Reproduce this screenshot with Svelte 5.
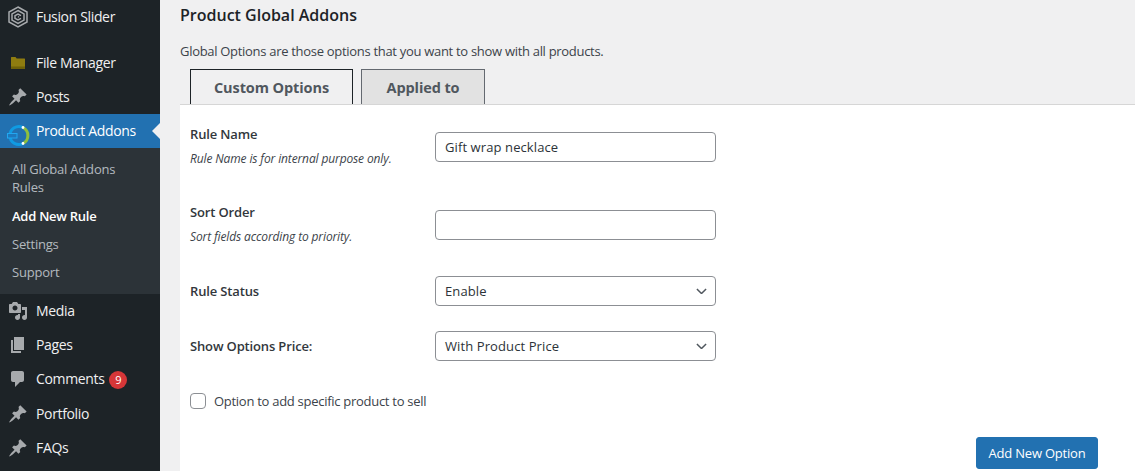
<script>
	const pin =
		'M10.44 3.02l1.82-1.82 6.36 6.35-1.83 1.82c-1.05-.68-2.48-.57-3.41.36l-.75.75c-.92.93-1.04 2.35-.35 3.41l-1.83 1.82-2.41-2.41-2.8 2.79c-.42.42-3.38 2.71-3.8 2.29s1.86-3.39 2.28-3.81l2.79-2.79L4.1 9.36l1.83-1.82c1.05.69 2.48.57 3.4-.36l.75-.75c.93-.92 1.05-2.35.36-3.41z';
	const media =
		'M13 11V4c0-.55-.45-1-1-1h-1.67L9 1H5L3.67 3H2c-.55 0-1 .45-1 1v7c0 .55.45 1 1 1h10c.55 0 1-.45 1-1zM7 4.5c1.38 0 2.5 1.12 2.5 2.5S8.38 9.5 7 9.5 4.5 8.38 4.5 7 5.62 4.5 7 4.5zM14 6h5v10.5c0 1.38-1.12 2.5-2.5 2.5S14 17.88 14 16.5s1.12-2.5 2.5-2.5c.17 0 .34.02.5.05V9h-3V6zm-4 8.05V13h2v3.5c0 1.38-1.12 2.5-2.5 2.5S7 17.88 7 16.5 8.12 14 9.5 14c.17 0 .34.02.5.05z';
	const pages = 'M6 15V2h10v13H6zm-1 1h8v2H3V5h2v11z';
	const comments =
		'M5 2h9c1.1 0 2 .9 2 2v7c0 1.1-.9 2-2 2h-2l-5 5v-5H5c-1.1 0-2-.9-2-2V4c0-1.1.9-2 2-2z';

	const lowerMenu = [
		{ label: 'Media', icon: media, h: 34 },
		{ label: 'Pages', icon: pages, h: 34 },
		{ label: 'Comments', icon: comments, h: 35, badge: 9 },
		{ label: 'Portfolio', icon: pin, h: 34 },
		{ label: 'FAQs', icon: pin, h: 34 }
	];
</script>

<div class="page">
	<aside class="sidebar">
		<a class="item first" href="#top">
			<svg class="icon logo" viewBox="0 0 22 22" fill="none" stroke="#a7aaad" stroke-width="1.5">
				<path d="M11 1l9 5v10l-9 5-9-5V6z" />
				<path d="M11 4.5l6 3.4v6.2l-6 3.4-6-3.4V7.9z" />
				<path d="M14 9.6L11 8 8 9.7v2.6l3 1.7 3-1.7" />
				<path d="M11 10.6l1 .5" />
			</svg>
			<span>Fusion Slider</span>
		</a>

		<a class="item files" href="#top">
			<svg class="icon" viewBox="0 0 20 20">
				<path d="M3 4.5c0-.3.2-.5.5-.5h4l1.2 1.4h7.8c.3 0 .5.2.5.5V15.5c0 .3-.2.5-.5.5h-13c-.3 0-.5-.2-.5-.5z" fill="#8f7c10" />
				<path d="M3 13.5h14v2c0 .3-.2.5-.5.5h-13c-.3 0-.5-.2-.5-.5z" fill="#6f6109" />
			</svg>
			<span>File Manager</span>
		</a>
		<a class="item" href="#top">
			<svg class="icon" viewBox="0 0 20 20"><path d={pin} fill="#a7aaad" /></svg>
			<span>Posts</span>
		</a>

		<a class="item current" href="#top">
			<svg class="icon addons" viewBox="0 0 24 24" fill="none">
				<path d="M17 3.5A9 9 0 1 0 17 19.5" stroke="#0f9be3" stroke-width="3" />
				<path d="M17 3.5A9 9 0 0 1 17 19.5" stroke="#8ebf3f" stroke-width="3" />
				<circle cx="17" cy="3.5" r="1.4" fill="#fff" />
				<circle cx="17" cy="19.5" r="1.4" fill="#fff" />
				<rect x="1.5" y="9.5" width="9.5" height="4.5" fill="#1d78bd" stroke="#22a7f0" />
			</svg>
			<span>Product Addons</span>
		</a>

		<ul class="submenu">
			<li class="wrapped"><a href="#top">All Global Addons Rules</a></li>
			<li><a class="active" href="#top">Add New Rule</a></li>
			<li><a href="#top">Settings</a></li>
			<li><a href="#top">Support</a></li>
		</ul>

		{#each lowerMenu as entry}
			<a class="item" style="height: {entry.h}px" href="#top">
				<svg class="icon" viewBox="0 0 20 20"><path d={entry.icon} fill="#a7aaad" /></svg>
				<span>{entry.label}</span>
				{#if entry.badge}
					<b class="badge">{entry.badge}</b>
				{/if}
			</a>
		{/each}
	</aside>

	<main class="content">
		<h1>Product Global Addons</h1>
		<p class="intro">Global Options are those options that you want to show with all products.</p>

		<div class="tabs">
			<button class="tab selected">Custom Options</button>
			<button class="tab">Applied to</button>
		</div>

		<section class="panel">
			<div class="row name-row">
				<div class="label">
					<strong>Rule Name</strong>
					<em>Rule Name is for internal purpose only.</em>
				</div>
				<input type="text" value="Gift wrap necklace" />
			</div>

			<div class="row sort-row">
				<div class="label">
					<strong>Sort Order</strong>
					<em>Sort fields according to priority.</em>
				</div>
				<input type="text" />
			</div>

			<div class="row status-row">
				<div class="label"><strong>Rule Status</strong></div>
				<div class="select">
					<span>Enable</span>
					<svg viewBox="0 0 12 7" fill="none"><path d="M1 1l5 5 5-5" stroke="#50575e" stroke-width="1.6" /></svg>
				</div>
			</div>

			<div class="row price-row">
				<div class="label"><strong>Show Options Price:</strong></div>
				<div class="select">
					<span>With Product Price</span>
					<svg viewBox="0 0 12 7" fill="none"><path d="M1 1l5 5 5-5" stroke="#50575e" stroke-width="1.6" /></svg>
				</div>
			</div>

			<label class="check">
				<input type="checkbox" />
				<span>Option to add specific product to sell</span>
			</label>

			<div class="actions">
				<button class="primary">Add New Option</button>
			</div>
		</section>
	</main>
</div>

<style>
	:global(body) {
		margin: 0;
		background: #f0f0f1;
		overflow: hidden;
	}

	.page {
		display: flex;
		height: 471px;
		overflow: hidden;
		font-family: 'Open Sans', 'Noto Sans', sans-serif;
		font-size: 13px;
		color: #3c434a;
	}

	.sidebar {
		flex: 0 0 160px;
		background: #1d2327;
	}

	.item {
		position: relative;
		box-sizing: border-box;
		display: flex;
		align-items: center;
		height: 34px;
		padding: 0 0 2px 36px;
		color: #f0f0f1;
		font-size: 14px;
		letter-spacing: -0.35px;
		text-decoration: none;
	}

	.first {
		margin-bottom: 12px;
	}

	.icon {
		position: absolute;
		left: 8px;
		top: 7px;
		width: 20px;
		height: 20px;
	}

	.logo {
		left: 7px;
		top: 6px;
		width: 22px;
		height: 22px;
	}

	.addons {
		left: 6px;
		top: 10px;
		width: 24px;
		height: 24px;
		overflow: visible;
	}

	.current {
		background: #2271b1;
		color: #fff;
	}

	.current::after {
		content: '';
		position: absolute;
		right: 0;
		top: 9px;
		border: 8px solid transparent;
		border-right-color: #f0f0f1;
		border-left-width: 0;
	}

	.submenu {
		list-style: none;
		margin: 0;
		padding: 7px 0 8px;
		background: #2c3338;
	}

	.submenu .wrapped {
		padding-bottom: 1px;
	}

	.submenu a {
		display: block;
		padding: 5px 12px;
		width: 120px;
		line-height: 18px;
		color: rgba(240, 246, 252, 0.7);
		text-decoration: none;
		letter-spacing: -0.2px;
	}

	.submenu .active {
		color: #fff;
		font-weight: 600;
		letter-spacing: -0.25px;
	}

	.badge {
		margin: 2px 0 0 5px;
		width: 18px;
		height: 18px;
		border-radius: 50%;
		background: #d63638;
		color: #fff;
		font-size: 11px;
		font-weight: 400;
		line-height: 18px;
		letter-spacing: 0;
		text-align: center;
	}

	.content {
		flex: 1;
		min-width: 0;
		padding-left: 20px;
	}

	h1 {
		margin: 5px 0 0;
		font-size: 16px;
		line-height: 20px;
		font-weight: 600;
		color: #1d2327;
	}

	.intro {
		margin: 17px 0 0;
		line-height: 19px;
		letter-spacing: -0.3px;
	}

	.tabs {
		display: flex;
		gap: 8px;
		margin-top: 8px;
		padding-left: 10px;
		height: 36px;
	}

	.tab {
		padding: 0;
		height: 36px;
		border: 1px solid #646970;
		border-bottom: 0;
		background: #e2e2e2;
		width: 124px;
		font: 700 14.5px 'Open Sans', 'Noto Sans', sans-serif;
		color: #50575e;
		letter-spacing: -0.1px;
	}

	.tab.selected {
		width: 163px;
		border-color: #1d2327;
		background: #f0f0f1;
	}

	.panel {
		background: #fff;
		border-top: 1px solid #d6d6d6;
		margin-top: -1px;
		position: relative;
		padding: 0 10px;
		height: 366px;
	}

	.row {
		display: flex;
		align-items: flex-start;
	}

	.label {
		flex: 0 0 245px;
		display: flex;
		flex-direction: column;
	}

	.label strong {
		font-weight: 600;
		letter-spacing: -0.15px;
		line-height: 18px;
		color: #32373c;
	}

	.label em {
		margin-top: 8px;
		font-size: 12px;
		line-height: 16px;
		letter-spacing: -0.13px;
	}

	.name-row {
		margin-top: 27px;
	}

	.sort-row {
		margin-top: 43px;
	}

	.status-row {
		margin-top: 31px;
	}

	.price-row {
		margin-top: 25px;
	}

	.status-row .label,
	.price-row .label {
		padding-top: 6px;
	}

	.name-row .label {
		margin-top: -7px;
	}

	.sort-row .label {
		margin-top: -7px;
	}

	input[type='text'],
	.select {
		box-sizing: border-box;
		width: 281px;
		height: 30px;
		margin: 0;
		padding: 0 9px;
		border: 1px solid #8c8f94;
		border-radius: 4px;
		background: #fff;
		font: 13px 'Open Sans', 'Noto Sans', sans-serif;
		letter-spacing: 0.1px;
		color: #2c3338;
	}

	.select {
		display: flex;
		align-items: center;
		justify-content: space-between;
		padding-right: 8px;
	}

	.select svg {
		width: 11px;
		height: 6.5px;
	}

	.check {
		display: flex;
		align-items: center;
		margin-top: 31px;
		letter-spacing: -0.28px;
	}

	.check input {
		appearance: none;
		box-sizing: border-box;
		width: 16px;
		height: 16px;
		margin: 0 8px 0 0;
		border: 1px solid #8c8f94;
		border-radius: 4px;
		background: #fff;
	}

	.actions {
		display: flex;
		justify-content: flex-end;
		margin: 27px 27px 0 0;
	}

	.primary {
		width: 122px;
		height: 32px;
		padding: 0;
		border: 1px solid #2271b1;
		border-radius: 3px;
		background: #2271b1;
		color: #fff;
		font: 13px 'Open Sans', 'Noto Sans', sans-serif;
		letter-spacing: -0.2px;
	}
</style>
